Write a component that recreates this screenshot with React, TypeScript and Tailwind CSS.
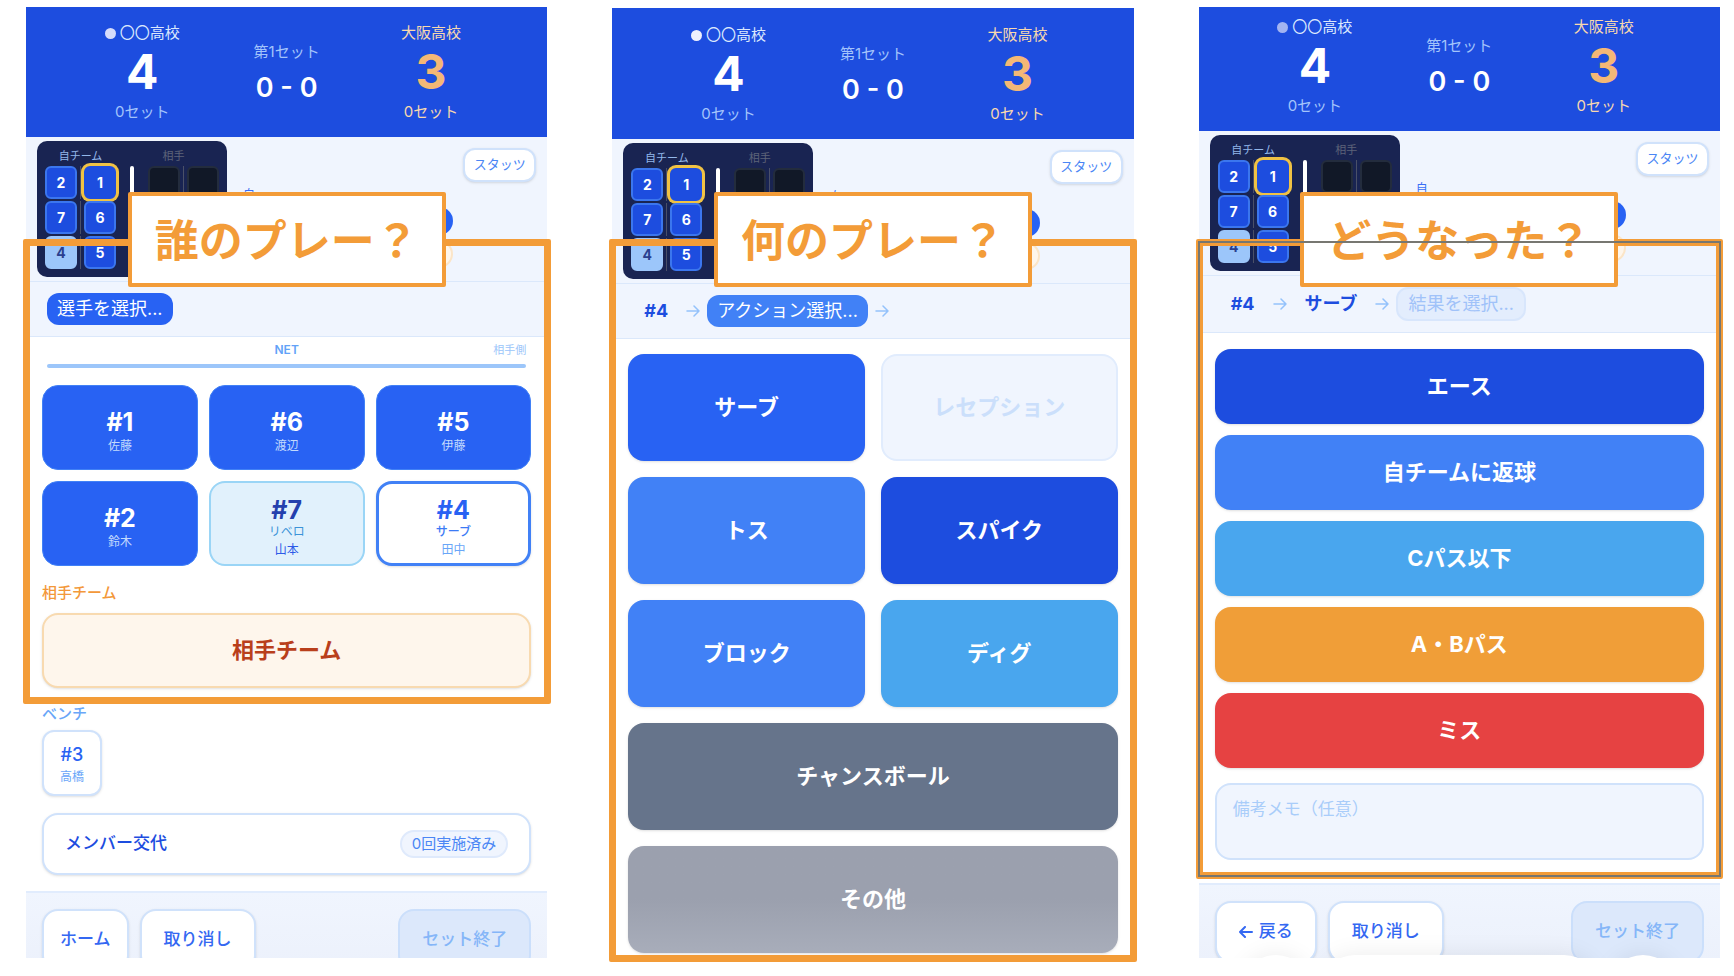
import type { ReactNode } from "react";

type Tone = { label: string; className: string; disabled?: boolean };

const CARD = "rounded-2xl border-2 border-[#d0e2fb] bg-white shadow-sm";

function Header({ padTop, dot }: { padTop: string; dot: string }) {
  return (
    <header className={`grid grid-cols-3 items-center bg-[#1d4ddf] px-11 pb-[15px] text-center text-[15px] leading-5 ${padTop}`}>
      <div>
        <div className="flex items-center justify-center gap-1 text-[#dbe8fd]">
          <span className={`size-[11px] rounded-full ${dot}`} />
          <span>〇〇高校</span>
        </div>
        <div className="mt-[5px] mb-1.5 text-5xl leading-[48px] font-bold text-white">4</div>
        <div className="text-[#a3c4fb]">0セット</div>
      </div>
      <div>
        <div className="text-[#a3c4fb]">第1セット</div>
        <div className="mt-2.5 text-[27px] leading-8 font-semibold text-white">0 - 0</div>
      </div>
      <div>
        <div className="text-[#f8d9ae]">大阪高校</div>
        <div className="mt-[5px] mb-1.5 text-5xl leading-[48px] font-bold text-[#f4b876]">3</div>
        <div className="text-[#f8d9ae]">0セット</div>
      </div>
    </header>
  );
}

const COURT_ROWS: [string, string][] = [
  ["2", "1"],
  ["7", "6"],
  ["4", "5"],
];

function cellTone(n: string) {
  if (n === "1") return "border-2 border-[#1d4ddf] bg-[#1d4ddf] text-white ring-3 ring-[#f0c244]";
  if (n === "4") return "border-2 border-[#9cc6fa] bg-[#9cc6fa] text-[#2a3f8f]";
  return "border-2 border-[#3b76ee] bg-[#1d4ddf] text-white";
}

function Court() {
  return (
    <div className="flex w-[190px] shrink-0 justify-between rounded-[10px] bg-[#192452] p-2">
      <div>
        <div className="mb-[3px] text-center text-[11px] leading-[14px] text-[#93b7ea]">自チーム</div>
        <div className="flex flex-col gap-0.5">
          {COURT_ROWS.map(([a, b]) => (
            <div key={a} className="flex gap-[3px]">
              <span className={`flex h-[33px] w-8 items-center justify-center rounded-md text-sm font-bold ${cellTone(a)}`}>{a}</span>
              <span className="w-px bg-[#4a5068]" />
              <span className={`flex h-[33px] w-8 items-center justify-center rounded-md text-sm font-bold ${cellTone(b)}`}>{b}</span>
            </div>
          ))}
        </div>
      </div>
      <div className="mt-[17px] w-1 rounded-full bg-white" />
      <div>
        <div className="mb-[3px] pr-5 text-center text-[11px] leading-[14px] text-[#5d6379]">相手</div>
        <div className="flex flex-col gap-0.5">
          {COURT_ROWS.map(([a]) => (
            <div key={a} className="flex gap-[3px]">
              <span className="h-[33px] w-8 rounded-md border-2 border-[#232c3d] bg-[#111827]" />
              <span className="w-px bg-[#4a5068]" />
              <span className="h-[33px] w-8 rounded-md border-2 border-[#232c3d] bg-[#111827]" />
            </div>
          ))}
        </div>
      </div>
    </div>
  );
}

function Status() {
  return (
    <section className="flex items-start border-b border-[#dbe8fb] bg-[#f0f5fe] px-[11px] py-1">
      <Court />
      <div className="mr-2.5 ml-4 flex flex-1 flex-col pt-[46px]">
        <div className="text-xs leading-4 text-[#3b6ff5]">自</div>
        <div className="mt-1 h-7 rounded-full bg-[#2862f3]" />
        <div className="mt-[5px] h-7 rounded-full border-2 border-[#fbe5c8] bg-[#fef6ec]" />
      </div>
      <button className="mt-[7px] h-[34px] w-[73px] rounded-xl border-2 border-[#d0e2fb] bg-white text-[13px] text-[#4a86f5] shadow-sm">
        スタッツ
      </button>
    </section>
  );
}

function Arrow() {
  return (
    <svg viewBox="0 0 14 12" className="mx-[7px] h-3 w-3.5 fill-none stroke-[#94c2fb] stroke-[1.5]" strokeLinecap="round" strokeLinejoin="round" aria-hidden="true">
      <path d="M1 6h12M8 1l5 5-5 5" />
    </svg>
  );
}

function Trail({ children }: { children: ReactNode }) {
  return (
    <nav className="flex items-center border-b border-[#dbe8fb] bg-[#f0f5fe] px-[21px] py-[11px] text-lg leading-8">
      {children}
    </nav>
  );
}

function Step({ children }: { children: ReactNode }) {
  return <span className="px-[11px] font-bold text-[#1d4ddf]">{children}</span>;
}

const PLAYERS = [
  { no: "#1", name: "佐藤" },
  { no: "#6", name: "渡辺" },
  { no: "#5", name: "伊藤" },
  { no: "#2", name: "鈴木" },
  { no: "#7", name: "山本", role: "リベロ", box: "border-2 border-[#9ad5f6] bg-[#e1f1fc]", num: "text-[#2440ad]", roleTone: "text-[#3b93d8]", nameTone: "text-[#2d5be8]" },
  { no: "#4", name: "田中", role: "サーブ", box: "border-3 border-[#4181f6] bg-white shadow-sm", num: "text-[#2862f3]", roleTone: "font-medium text-[#3b7af5]", nameTone: "text-[#69a6f8]" },
];

function PlayerBody() {
  return (
    <div className="bg-white px-4 pt-[5px] pb-4">
      <div className="grid grid-cols-3 items-center px-[5px] leading-4">
        <span />
        <span className="text-center text-xs font-semibold text-[#62a2f8]">NET</span>
        <span className="text-right text-[11px] text-[#9cc6fa]">相手側</span>
      </div>
      <div className="mx-[5px] mt-1.5 h-1 rounded-full bg-[#9cc6fa]" />
      <div className="mt-[17px] grid grid-cols-3 gap-[11px]">
        {PLAYERS.map((p) => (
          <button
            key={p.no}
            className={`flex h-[85px] flex-col items-center justify-center rounded-2xl pt-1.5 text-xs ${p.box ?? "border border-[#4181f6] bg-[#2862f3]"}`}
          >
            <span className={`text-[25px] leading-7 font-bold ${p.num ?? "text-white"}`}>{p.no}</span>
            {p.role && <span className={`leading-4 ${p.roleTone}`}>{p.role}</span>}
            <span className={`mt-0.5 leading-4 ${p.nameTone ?? "text-[#c3dafd]"}`}>{p.name}</span>
          </button>
        ))}
      </div>
      <h2 className="mt-[17px] text-[15px] leading-5 font-medium text-[#f3983a]">相手チーム</h2>
      <button className="mt-2.5 h-[75px] w-full rounded-2xl border-2 border-[#f8dab0] bg-[#fef6ec] text-[22px] font-bold text-[#b93f1b] shadow-sm">
        相手チーム
      </button>
      <h2 className="mt-4 text-[15px] leading-5 font-medium text-[#69a6f8]">ベンチ</h2>
      <button className="mt-1.5 flex h-[66px] w-[60px] flex-col items-center justify-center rounded-xl border-2 border-[#d0e2fb] bg-white pt-1 shadow-sm">
        <span className="text-lg leading-6 font-medium text-[#2862f3]">#3</span>
        <span className="text-xs leading-5 text-[#69a6f8]">高橋</span>
      </button>
      <button className={`mt-[17px] flex h-[62px] w-full items-center justify-between px-[21px] ${CARD}`}>
        <span className="text-[17px] font-medium text-[#1d4ddf]">メンバー交代</span>
        <span className="rounded-full border-2 border-[#dfeafc] bg-[#f0f5fe] px-2.5 text-[15px] leading-6 text-[#4a86f5]">0回実施済み</span>
      </button>
    </div>
  );
}

const ACTIONS: Tone[] = [
  { label: "サーブ", className: "bg-[#2862f3] text-white shadow-sm" },
  { label: "レセプション", className: "border-2 border-[#e1ecfd] bg-[#f0f5fe] text-[#cbdffb]", disabled: true },
  { label: "トス", className: "bg-[#4181f6] text-white shadow-sm" },
  { label: "スパイク", className: "bg-[#1d4ddf] text-white shadow-sm" },
  { label: "ブロック", className: "bg-[#4181f6] text-white shadow-sm" },
  { label: "ディグ", className: "bg-[#49a6ee] text-white shadow-sm" },
  { label: "チャンスボール", className: "col-span-2 bg-[#66748b] text-white shadow-sm" },
  { label: "その他", className: "col-span-2 bg-linear-to-b from-[#9ba0ae] from-50% to-[#a8adba] text-white shadow-sm" },
];

const RESULTS: Tone[] = [
  { label: "エース", className: "bg-[#1d4ddf]" },
  { label: "自チームに返球", className: "bg-[#4181f6]" },
  { label: "Cパス以下", className: "bg-[#49a6ee]" },
  { label: "A・Bパス", className: "bg-[#f09e38]" },
  { label: "ミス", className: "bg-[#e64242]" },
];

function ActionBody() {
  return (
    <div className="grid grid-cols-2 gap-4 bg-white px-4 pt-[15px] pb-4">
      {ACTIONS.map((a) => (
        <button key={a.label} disabled={a.disabled} className={`h-[107px] rounded-2xl text-[22px] font-bold ${a.className}`}>
          {a.label}
        </button>
      ))}
    </div>
  );
}

function ResultBody() {
  return (
    <div className="flex flex-col gap-[11px] bg-white px-4 pt-4 pb-[23px]">
      {RESULTS.map((r) => (
        <button key={r.label} className={`h-[75px] rounded-2xl text-[22px] font-bold text-white shadow-sm ${r.className}`}>
          {r.label}
        </button>
      ))}
      <textarea
        aria-label="備考メモ"
        placeholder="備考メモ（任意）"
        className="mt-1 block h-[77px] resize-none rounded-2xl border-2 border-[#d0e2fb] bg-[#f0f5fe] px-4 py-2.5 text-[17px] leading-7 placeholder:text-[#a9cdfa]"
      />
    </div>
  );
}

function Footer({ back, backPad }: { back: ReactNode; backPad: string }) {
  return (
    <footer className="flex gap-[11px] border-t-2 border-[#e1ecfd] bg-linear-to-b from-[#f0f5fe] to-[#ebf0fb] px-4 pt-4 pb-4 text-[17px] font-medium text-[#3468f2]">
      <button className={`flex h-[62px] items-center gap-1.5 ${backPad} ${CARD}`}>{back}</button>
      <button className={`h-[62px] px-[22px] ${CARD}`}>取り消し</button>
      <button className="ml-auto h-[62px] rounded-2xl border-2 border-[#cbdffb] bg-[#dce8fb] px-[22px] text-[#85b6f8]" disabled>
        セット終了
      </button>
    </footer>
  );
}

function BrowserBar() {
  return (
    <div className="absolute inset-x-0 -bottom-[65px] flex h-[68px] gap-[11px] px-[43px]">
      <span className="w-[68px] rounded-full bg-white shadow-[0_0_24px_rgba(0,0,0,0.08)]" />
      <span className="flex-1 rounded-full bg-white shadow-[0_0_24px_rgba(0,0,0,0.08)]" />
      <span className="w-[68px] rounded-full bg-white shadow-[0_0_24px_rgba(0,0,0,0.08)]" />
    </div>
  );
}

function Screen({ title, frame, outline, children }: { title: string; frame: string; outline?: boolean; children: ReactNode }) {
  return (
    <section className="relative min-h-0">
      <div className="relative flex h-full flex-col overflow-hidden *:shrink-0">{children}</div>
      <div className={`pointer-events-none absolute top-[232px] rounded-xs border-[7px] border-[#f39c38] ${frame}`} />
      <div className="absolute inset-x-0 top-[185px] flex justify-center">
        <h1 className="rounded-xs border-4 border-[#f39c38] bg-white px-[23px] pt-[23px] pb-5 text-[44px] leading-[44px] font-bold whitespace-nowrap text-[#f39c38]">
          {title}
        </h1>
      </div>
      {outline && (
        <div className={`pointer-events-none absolute top-[232px] border-[7px] border-transparent ${frame}`}>
          <div className="absolute -inset-[5px] border-2 border-[#777771]" />
        </div>
      )}
    </section>
  );
}

export default function App() {
  return (
    <main className="grid h-screen grid-cols-3 grid-rows-1 gap-[65px] bg-white pt-[7px] pr-[14px] pb-[18px] pl-[26px] font-['Inter','Noto_Sans_CJK_JP',sans-serif]">
      <Screen title="誰のプレー？" frame="-left-[3px] -right-1 h-[465px]">
        <Header padTop="pt-4" dot="bg-[#d6dcfb]" />
        <Status />
        <Trail>
          <span className="rounded-xl bg-[#2862f3] px-2.5 text-white">選手を選択...</span>
        </Trail>
        <PlayerBody />
        <Footer backPad="px-4" back="ホーム" />
      </Screen>

      <Screen title="何のプレー？" frame="-left-[3px] -right-[3px] h-[723px]">
        <div className="mt-px">
          <Header padTop="pt-[17px]" dot="bg-[#eef0fd]" />
        </div>
        <Status />
        <Trail>
          <Step>#4</Step>
          <Arrow />
          <span className="rounded-xl bg-[#4181f6] px-2.5 text-white">アクション選択...</span>
          <Arrow />
        </Trail>
        <ActionBody />
      </Screen>

      <Screen title="どうなった？" frame="-left-[3px] -right-[3px] h-[640px]" outline>
        <Header padTop="pt-2.5" dot="bg-[#a3b4f1]" />
        <Status />
        <Trail>
          <Step>#4</Step>
          <Arrow />
          <Step>サーブ</Step>
          <Arrow />
          <span className="rounded-xl border-2 border-[#d8e6fc] bg-[#e3edfd] px-2.5 leading-[30px] text-[#a0c2f9]">結果を選択...</span>
        </Trail>
        <ResultBody />
        <Footer
          backPad="px-[22px]"
          back={
            <>
              <svg viewBox="0 0 14 12" className="h-3 w-3.5 fill-none stroke-current stroke-2" strokeLinecap="round" strokeLinejoin="round" aria-hidden="true">
                <path d="M13 6H1M6 1L1 6l5 5" />
              </svg>
              戻る
            </>
          }
        />
        <BrowserBar />
      </Screen>
    </main>
  );
}
